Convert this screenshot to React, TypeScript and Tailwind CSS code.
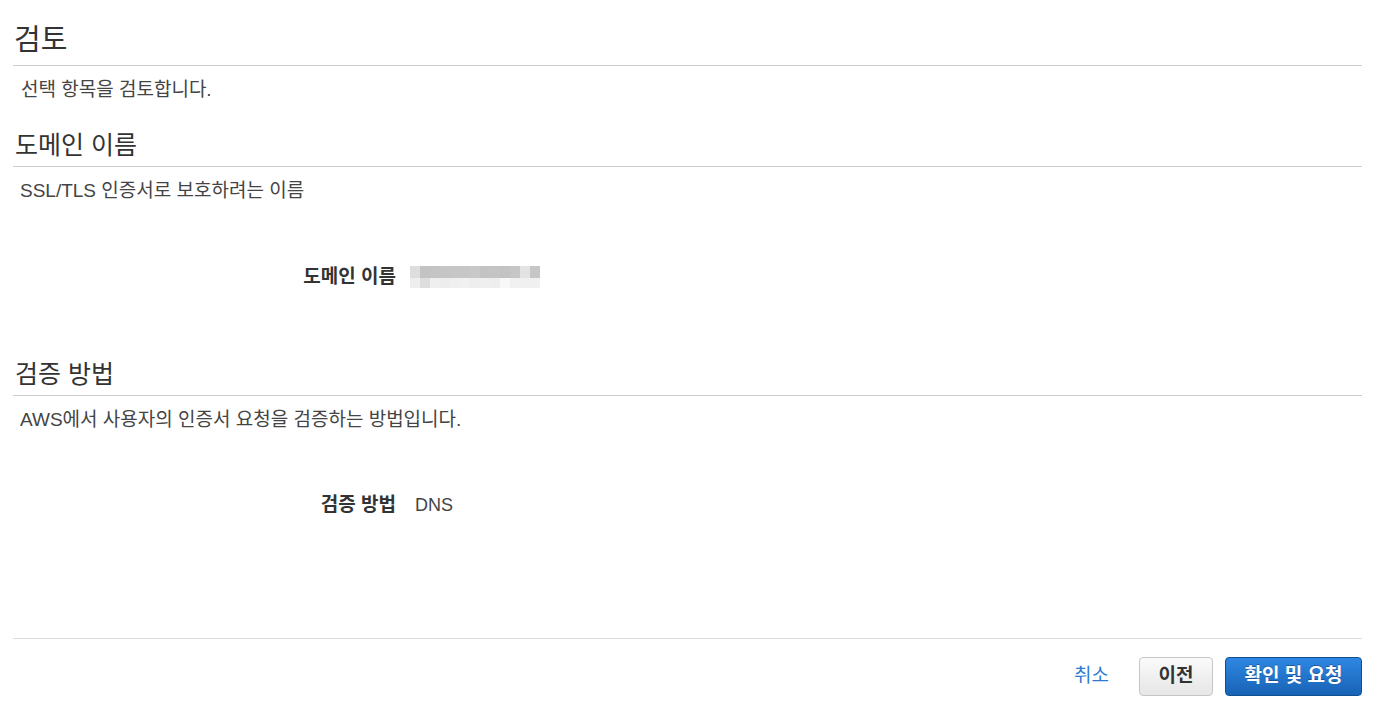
import React from "react";

const font = { fontFamily: '"Liberation Sans", "Noto Sans CJK KR", sans-serif' };

// pixelated (blurred) domain value
const topRow = ["#dedede", "#c3c3c3", "#c4c4c4", "#c5c5c5", "#c6c6c6", "#c6c6c6", "#c8c8c8", "#c3c3c3", "#c4c4c4", "#c3c3c3", "#c6c6c6", "#e3e3e3", "#c6c6c6"];
const botRow = ["#eeeeee", "#dddddd", "#efefef", "#ededed", "#efefef", "#f1f1f1", "#eeeeee", "#efefef", "#eeeeee", "#f8f8f8", "#f1f1f1", "#f0f0f0", "#f0f0f0"];

function Blurred() {
  return (
    <div className="flex flex-col">
      <div className="flex">
        {topRow.map((c, i) => (
          <div key={i} className="w-[10px] h-[12px]" style={{ background: c }} />
        ))}
      </div>
      <div className="flex">
        {botRow.map((c, i) => (
          <div key={i} className="w-[10px] h-[10px]" style={{ background: c }} />
        ))}
      </div>
    </div>
  );
}

function Section({ title, desc, label, rowGap, children }: { title: string; desc: string; label: string; rowGap: string; children: React.ReactNode }) {
  return (
    <div>
      <h2 className="text-[25px] leading-[30px] text-[#333] px-[2px] pb-[6px] border-b border-[#cccccc]">{title}</h2>
      <p className="text-[19px] leading-[24px] text-[#444] pl-[7px] mt-[12px]">{desc}</p>
      <div className={`flex items-center h-[24px] ${rowGap}`}>
        <div className="w-[383px] text-right font-bold text-[19px] text-[#333]">{label}</div>
        <div className="ml-[14px] text-[18px] text-[#444]">{children}</div>
      </div>
    </div>
  );
}

export default function App() {
  return (
    <div className="bg-white min-h-[723px] px-[13px] pr-[33px]" style={font}>
      <h1 className="text-[29px] leading-[36px] text-[#333] pt-[22px] pb-[7px] px-[1px] border-b border-[#cccccc]">검토</h1>
      <p className="text-[19px] leading-[24px] text-[#444] pl-[8px] mt-[12px]">선택 항목을 검토합니다.</p>

      <div className="mt-[28px]">
        <Section title="도메인 이름" desc="SSL/TLS 인증서로 보호하려는 이름" label="도메인 이름" rowGap="mt-[62px]">
          <Blurred />
        </Section>
      </div>

      <div className="mt-[70px]">
        <Section title="검증 방법" desc="AWS에서 사용자의 인증서 요청을 검증하는 방법입니다." label="검증 방법" rowGap="mt-[61px]">
          <span className="pl-[5px]">DNS</span>
        </Section>
      </div>

      <div className="mt-[121px] border-t border-[#dddddd] flex items-center justify-end pt-[18px]">
        <a className="text-[19px] text-[#2e7bcf] mr-[30px] cursor-pointer">취소</a>
        <button className="w-[74px] h-[39px] rounded-[4px] border border-[#c6c6c6] bg-gradient-to-b from-[#fafafa] to-[#e6e6e6] text-[19px] font-bold text-[#333] mr-[12px]">
          이전
        </button>
        <button className="w-[137px] h-[39px] rounded-[4px] border border-[#11508f] bg-gradient-to-b from-[#2e87e3] to-[#1863b5] text-[19px] font-bold text-white [text-shadow:0_-1px_0_rgba(0,0,0,0.3)]">
          확인 및 요청
        </button>
      </div>
    </div>
  );
}
